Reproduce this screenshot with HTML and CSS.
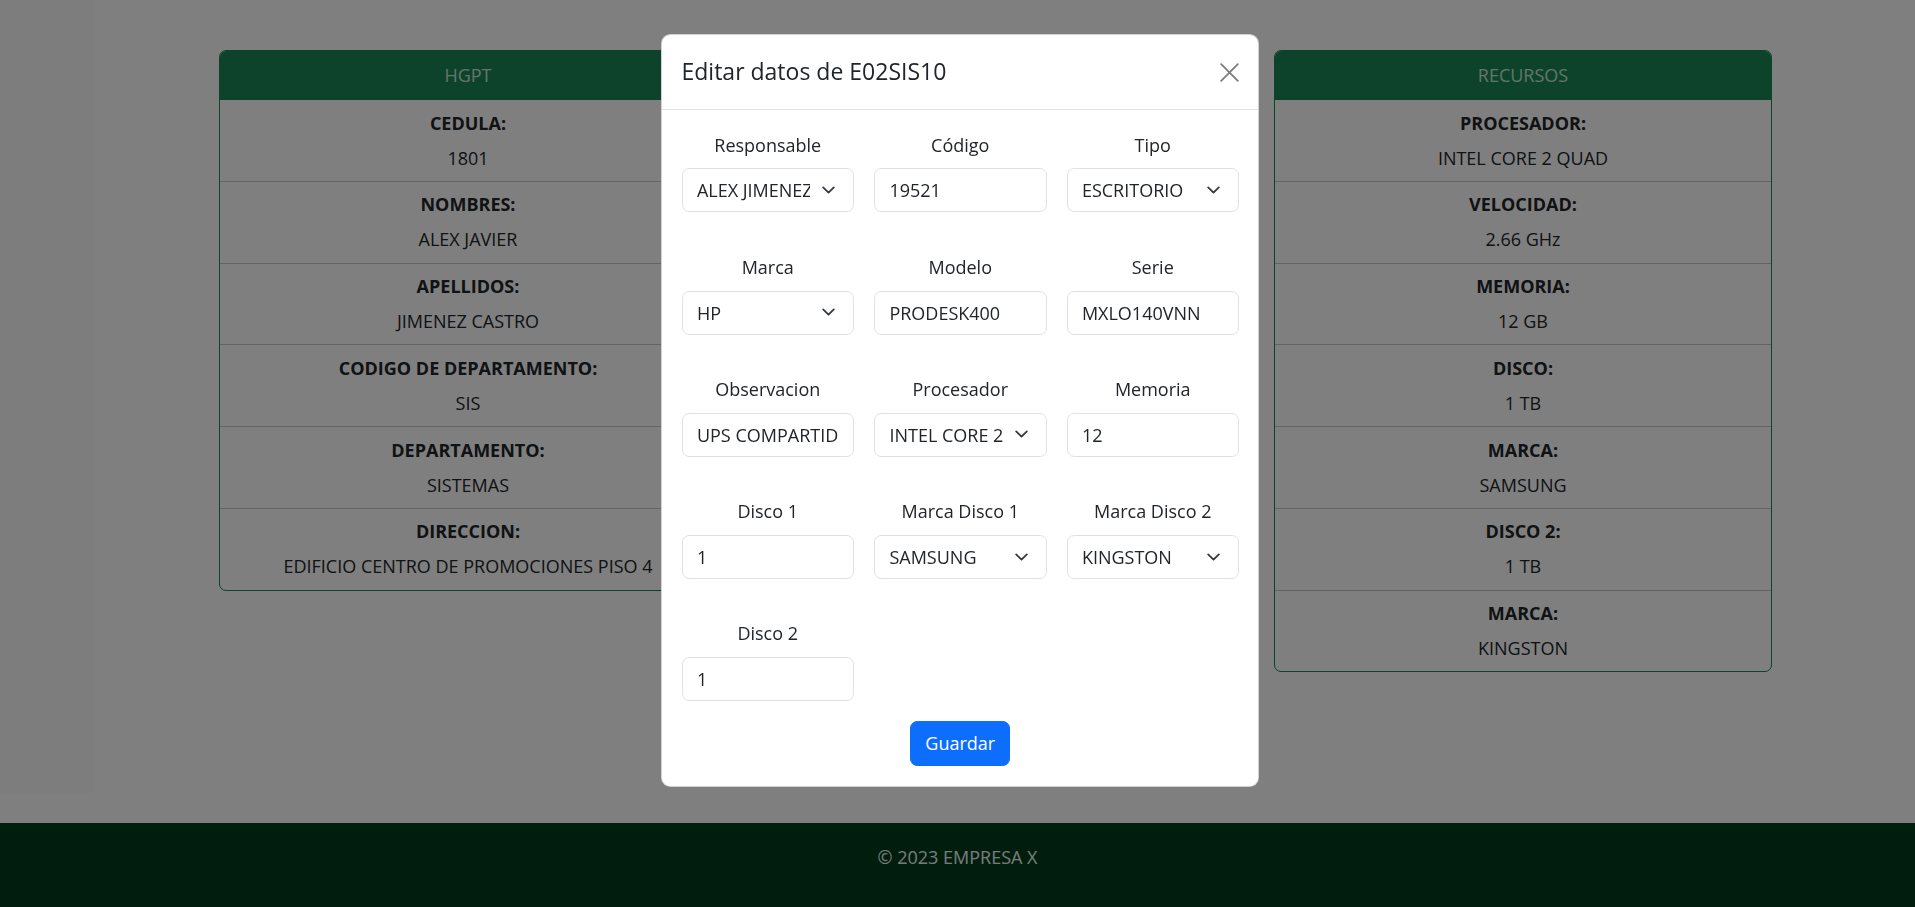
FILE: index.html
```html
<!DOCTYPE html>
<html lang="es">
<head>
<meta charset="utf-8">
<title>Equipos</title>
<link rel="stylesheet" href="styles.css">
</head>
<body>
<div class="page">
  <div class="layout">
    <aside class="sidebar"></aside>
    <main class="content">
      <div class="cards">
        <section class="card">
          <div class="card-header">HGPT</div>
          <ul class="items">
            <li class="item"><strong>CEDULA:</strong><span>1801</span></li>
            <li class="item"><strong>NOMBRES:</strong><span>ALEX JAVIER</span></li>
            <li class="item"><strong>APELLIDOS:</strong><span>JIMENEZ CASTRO</span></li>
            <li class="item"><strong>CODIGO DE DEPARTAMENTO:</strong><span>SIS</span></li>
            <li class="item"><strong>DEPARTAMENTO:</strong><span>SISTEMAS</span></li>
            <li class="item"><strong>DIRECCION:</strong><span>EDIFICIO CENTRO DE PROMOCIONES PISO 4</span></li>
          </ul>
        </section>
        <div class="card-slot"></div>
        <section class="card">
          <div class="card-header">RECURSOS</div>
          <ul class="items">
            <li class="item"><strong>PROCESADOR:</strong><span>INTEL CORE 2 QUAD</span></li>
            <li class="item"><strong>VELOCIDAD:</strong><span>2.66 GHz</span></li>
            <li class="item"><strong>MEMORIA:</strong><span>12 GB</span></li>
            <li class="item"><strong>DISCO:</strong><span>1 TB</span></li>
            <li class="item"><strong>MARCA:</strong><span>SAMSUNG</span></li>
            <li class="item"><strong>DISCO 2:</strong><span>1 TB</span></li>
            <li class="item"><strong>MARCA:</strong><span>KINGSTON</span></li>
          </ul>
        </section>
      </div>
    </main>
  </div>
  <footer class="footer">© 2023 EMPRESA X</footer>
</div>

<div class="backdrop"></div>

<div class="modal">
  <div class="modal-header">
    <h5 class="modal-title">Editar datos de E02SIS10</h5>
    <button class="btn-close" type="button" aria-label="Close">
      <svg viewBox="0 0 16 16" width="19" height="19"><path d="M1 1L15 15M15 1L1 15" stroke="#000" stroke-width="1.6" stroke-linecap="round"/></svg>
    </button>
  </div>
  <form class="modal-body">
    <div class="fields">
      <div class="field"><label>Responsable</label>
        <select class="control select"><option>ALEX JIMENEZ CASTRO</option></select></div>
      <div class="field"><label>Código</label>
        <input class="control" type="text" value="19521"></div>
      <div class="field"><label>Tipo</label>
        <select class="control select"><option>ESCRITORIO</option></select></div>

      <div class="field"><label>Marca</label>
        <select class="control select"><option>HP</option></select></div>
      <div class="field"><label>Modelo</label>
        <input class="control" type="text" value="PRODESK400"></div>
      <div class="field"><label>Serie</label>
        <input class="control" type="text" value="MXLO140VNN"></div>

      <div class="field"><label>Observacion</label>
        <input class="control" type="text" value="UPS COMPARTIDO"></div>
      <div class="field"><label>Procesador</label>
        <select class="control select"><option>INTEL CORE 2 QUAD</option></select></div>
      <div class="field"><label>Memoria</label>
        <input class="control" type="text" value="12"></div>

      <div class="field"><label>Disco 1</label>
        <input class="control" type="text" value="1"></div>
      <div class="field"><label>Marca Disco 1</label>
        <select class="control select"><option>SAMSUNG</option></select></div>
      <div class="field"><label>Marca Disco 2</label>
        <select class="control select"><option>KINGSTON</option></select></div>

      <div class="field"><label>Disco 2</label>
        <input class="control" type="text" value="1"></div>
    </div>
    <div class="actions">
      <button class="btn-primary" type="button">Guardar</button>
    </div>
  </form>
</div>
</body>
</html>
```

FILE: styles.css
```css
* { box-sizing: border-box; }

html, body {
  margin: 0;
  padding: 0;
  height: 100%;
  overflow: hidden;
}

body {
  font-family: "Open Sans", "Noto Sans", sans-serif;
  font-size: 18px;
  color: #212529;
  background: #ffffff;
}

.page {
  display: flex;
  flex-direction: column;
  min-height: 100%;
}

.layout {
  display: flex;
  height: 823px;
}

.sidebar {
  width: 93px;
  height: 793px;
  background: #fbfbfb;
  flex: none;
}

.content {
  flex: 1;
  padding: 50px 0 0 126px;
}

.cards {
  display: grid;
  grid-template-columns: repeat(3, 498px);
  column-gap: 29.5px;
  align-items: start;
}

.card {
  border: 1px solid #198754;
  border-radius: 7px;
  overflow: hidden;
  background: #fff;
}

.card-header {
  height: 49px;
  background: #198754;
  color: #c9e8d6;
  text-align: center;
  line-height: 48px;
  font-size: 18px;
}

.items {
  list-style: none;
  margin: 0;
  padding: 0;
}

.item {
  display: flex;
  flex-direction: column;
  align-items: center;
  padding: 8.6px 19px 8.4px;
  border-bottom: 1px solid #c8c8c8;
  line-height: 28.8px;
}

.item:last-child { border-bottom: none; }

.item strong {
  font-weight: 700;
}

.item span {
  margin-top: 6.2px;
}

.footer {
  height: 84px;
  background: #003a1b;
  color: #f2f7f3;
  text-align: center;
  padding-top: 20px;
  line-height: 28.8px;
  font-size: 18px;
}

.backdrop {
  position: fixed;
  inset: 0;
  background: rgba(0, 0, 0, 0.5);
}

.modal {
  position: absolute;
  left: 661px;
  top: 34px;
  width: 598px;
  background: #fff;
  border-radius: 9.6px;
  border: 1px solid rgba(0, 0, 0, 0.175);
}

.modal-header {
  height: 75px;
  display: flex;
  align-items: center;
  justify-content: space-between;
  padding: 0 19px 0 19.5px;
  border-bottom: 1px solid #dee2e6;
}

.modal-title {
  margin: 0;
  font-size: 23px;
  font-weight: 500;
  line-height: 1.2;
  color: #212529;
}

.btn-close {
  width: 19px;
  height: 19px;
  padding: 0;
  border: 0;
  background: transparent;
  opacity: 0.5;
  display: flex;
}

.modal-body {
  padding: 20.6px 19px 20.5px 19.5px;
  margin: 0;
}

.fields {
  display: grid;
  grid-template-columns: repeat(3, 1fr);
  column-gap: 20px;
  row-gap: 40.35px;
}

.field {
  display: flex;
  flex-direction: column;
}

.field label {
  text-align: center;
  line-height: 28.8px;
  margin-bottom: 9px;
  color: #212529;
}

.control {
  height: 44px;
  width: 100%;
  border: 1px solid #dee2e6;
  border-radius: 7.2px;
  padding: 0 14.4px;
  font-family: inherit;
  font-size: 18px;
  color: #212529;
  background-color: #fff;
  outline: none;
}

.select {
  appearance: none;
  -webkit-appearance: none;
  padding-right: 43px;
  background-image: url("data:image/svg+xml,%3csvg xmlns='http://www.w3.org/2000/svg' viewBox='0 0 16 16'%3e%3cpath fill='none' stroke='%23343a40' stroke-linecap='round' stroke-linejoin='round' stroke-width='2' d='m2 5 6 6 6-6'/%3e%3c/svg%3e");
  background-repeat: no-repeat;
  background-position: right 14.4px center;
  background-size: 19.2px 14.4px;
}

.actions {
  display: flex;
  justify-content: center;
  margin-top: 20px;
}

.btn-primary {
  width: 100px;
  height: 45px;
  background: #0d6efd;
  color: #fff;
  border: 1px solid #0d6efd;
  border-radius: 7.2px;
  font-family: inherit;
  font-size: 18px;
  padding: 0;
}
```
